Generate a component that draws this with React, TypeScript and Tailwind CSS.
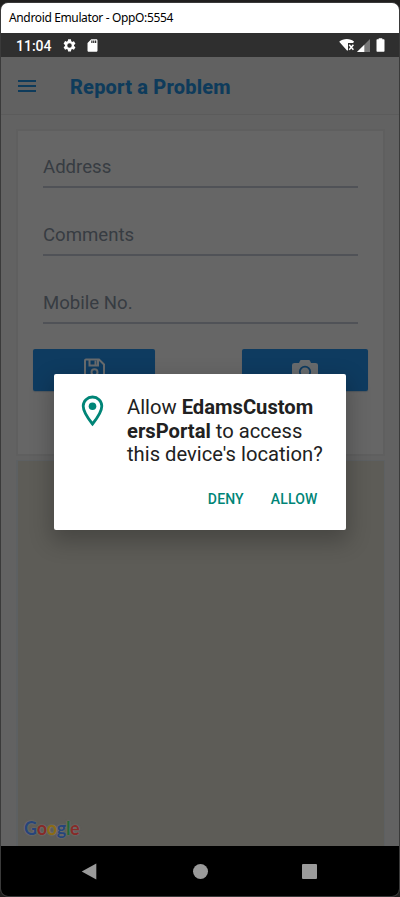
import React from "react";

function StatusBar() {
  return (
    <div className="flex h-6 shrink-0 items-center bg-[#2f2f2f] pl-[15px] pr-[14px] text-white">
      <span className="w-[37px] whitespace-nowrap pt-[2px] text-[14px] font-medium leading-6">11:04</span>
      <svg className="ml-[9px] h-[15px] w-[15px]" viewBox="0 0 24 24" fill="currentColor">
        <path d="M19.14 12.94a7.07 7.07 0 0 0 0-1.88l2.03-1.58a.5.5 0 0 0 .12-.61l-1.92-3.32a.49.49 0 0 0-.59-.22l-2.39.96a7 7 0 0 0-1.62-.94l-.36-2.54A.48.48 0 0 0 13.93 2h-3.84a.48.48 0 0 0-.48.41l-.36 2.54a7 7 0 0 0-1.62.94l-2.39-.96a.49.49 0 0 0-.59.22L2.74 8.87a.48.48 0 0 0 .12.61l2.03 1.58a7.07 7.07 0 0 0 0 1.88l-2.03 1.58a.5.5 0 0 0-.12.61l1.92 3.32c.12.22.37.29.59.22l2.39-.96a7 7 0 0 0 1.62.94l.36 2.54c.05.24.24.41.48.41h3.84c.24 0 .44-.17.47-.41l.36-2.54a7 7 0 0 0 1.62-.94l2.39.96c.22.08.47 0 .59-.22l1.92-3.32a.48.48 0 0 0-.12-.61zM12 15.6a3.6 3.6 0 1 1 0-7.2 3.6 3.6 0 0 1 0 7.2z" />
      </svg>
      <svg className="ml-[8px] h-[15px] w-[15px]" viewBox="0 0 24 24" fill="currentColor">
        <path d="M18 2h-8L4.02 8 4 20c0 1.1.9 2 2 2h12c1.1 0 2-.9 2-2V4c0-1.1-.9-2-2-2zm-6 6h-2V4h2zm3 0h-2V4h2zm3 0h-2V4h2z" />
      </svg>
      <svg className="ml-auto h-[14px] w-[16px]" viewBox="0 0 16 14">
        <path d="M.2 3.8C4.2.2 11.5.2 15.2 3.8L14 5H9v7.6h-1z" fill="#fff" />
        <path d="M10.2 6.7l4.2 5M14.4 6.7l-4.2 5" stroke="#fff" strokeWidth="1.5" />
      </svg>
      <svg className="ml-[2px] h-[13px] w-[13px]" viewBox="0 0 13 13">
        <path d="M13 0v13H0z" fill="#787878" />
        <path d="M7.3 5.7V13H0z" fill="#fff" />
      </svg>
      <svg className="ml-[6px] h-[14px] w-[9px]" viewBox="0 0 9 14" fill="currentColor">
        <path d="M1.2 1.3h1.5V.2h3.6v1.1h1.5q.7 0 .7.7v11q0 .8-.7.8H1.2q-.7 0-.7-.8V2q0-.7.7-.7z" />
      </svg>
    </div>
  );
}

function Field({ label }: { label: string }) {
  return (
    <div className="flex h-[58px] flex-col justify-end border-b-2 border-[#505257] pb-[7px]">
      <span className="text-[18.6px] leading-[24px] text-[#373c42]">{label}</span>
    </div>
  );
}

function FormCard() {
  return (
    <section className="ml-[15px] mr-[14px] mt-[14px] h-[327px] shrink-0 border-2 border-[#5f5f5f] bg-[#666666]">
      <div className="mx-[25px] -mt-px flex flex-col gap-[10px]">
        <Field label="Address" />
        <Field label="Comments" />
        <Field label="Mobile No." />
      </div>
      <div className="mt-[25px] flex justify-between px-[15px]">
        <button className="flex h-[42px] w-[122px] items-start justify-center rounded-[2px] bg-[#0e3b60] pt-[8px] shadow-[0_1px_1px_#50585f]">
          <svg className="h-[24px] w-[23px]" viewBox="0 0 23 24" fill="none" stroke="#686b6d" strokeWidth="2">
            <path d="M3 2.5h13l5 5v13q0 1-1 1H3q-1 0-1-1v-17q0-1 1-1z" />
            <path d="M6.5 2.5v6H15v-6M12.5 3.5v4" />
            <circle cx="11.5" cy="15.2" r="3" />
          </svg>
        </button>
        <button className="flex h-[42px] w-[126px] items-start justify-center rounded-[2px] bg-[#0e3b60] pt-[11px] shadow-[0_1px_1px_#50585f]">
          <svg className="h-[23px] w-[26px]" viewBox="0 0 26 23">
            <path d="M2.5 3H7l1-2.3Q8.3 0 9 0h8q.7 0 1 .7L19 3h4.500Q26 3 26 5v15q0 3-2.5 3h-21Q0 23 0 20V5q0-2 2.5-2z" fill="#686b6d" />
            <circle cx="13" cy="11.8" r="5.2" fill="none" stroke="#0e3b60" strokeWidth="1.8" />
          </svg>
        </button>
      </div>
    </section>
  );
}

function MapPanel() {
  return (
    <section className="ml-[15px] mr-[14px] mt-1 flex flex-1 items-end border-l-2 border-r border-t border-[#5d6062] bg-[#5d5c57] pb-[7px] pl-[6px]">
      <span className="whitespace-nowrap font-['Lato',sans-serif] text-[18px] font-bold leading-[22px] tracking-[-0.3px] [text-shadow:0_0_1px_#777,0_0_2px_#777]">
        <span className="text-[#27457a]">G</span>
        <span className="text-[#862b28]">o</span>
        <span className="text-[#8b6b14]">o</span>
        <span className="text-[#27457a]">g</span>
        <span className="text-[#246735]">l</span>
        <span className="text-[#862b28]">e</span>
      </span>
    </section>
  );
}

function PermissionDialog() {
  return (
    <div role="dialog" className="absolute left-[54px] top-[374px] h-[156px] w-[292px] rounded-[2px] bg-white shadow-[0_9px_22px_3px_rgba(0,0,0,0.24)]">
      <div className="flex pt-[21px]">
        <svg className="ml-[27px] h-[32px] w-[23px] shrink-0" viewBox="0 0 23 32">
          <path d="M11.5 2c-5.2 0-9.3 4-9.3 9.1 0 6.5 9.3 17.9 9.3 17.9s9.3-11.4 9.3-17.9C20.8 6 16.7 2 11.5 2z" fill="none" stroke="#008577" strokeWidth="2.8" />
          <circle cx="11.5" cy="11.3" r="3.8" fill="#008577" />
        </svg>
        <p className="ml-[23px] whitespace-nowrap pt-px text-[20.2px] leading-[23.6px] text-[#212121]">
          Allow <b className="font-bold">EdamsCustom</b>
          <br />
          <b className="font-bold">ersPortal</b> to access
          <br />
          this device's location?
        </p>
      </div>
      <div className="mt-[22px] flex justify-end gap-[27px] pr-[28.5px] text-[14px] font-medium leading-[20px] tracking-[0.15px] text-[#008577]">
        <button>DENY</button>
        <button>ALLOW</button>
      </div>
    </div>
  );
}

function NavBar() {
  return (
    <nav className="flex h-[50px] shrink-0 items-center bg-black pl-[80px] pr-[82px] text-[#9a9a9a]">
      <svg className="h-[17px] w-[16px]" viewBox="0 0 16 17" fill="currentColor"><path d="M.7 8.5 15.3.5v16z" /></svg>
      <span className="ml-auto mr-[-1px] h-[15px] w-[15px] rounded-full bg-[#9a9a9a]" />
      <span className="ml-auto h-[15px] w-[15px] rounded-[1px] bg-[#9a9a9a]" />
    </nav>
  );
}

export default function App() {
  return (
    <div className="h-[897px] w-[400px] overflow-hidden bg-[#201f1e] font-['Roboto',sans-serif]">
      <main className="relative flex h-[897px] flex-col overflow-hidden pt-[2px]">
        <div className="flex min-h-0 flex-1 flex-col overflow-hidden rounded-[8px] border border-[#3a3a3a] bg-[#626262]">
          <header className="flex h-[30px] shrink-0 items-center bg-white pl-2 font-['Noto_Sans',sans-serif] text-[12px] tracking-[-0.36px] text-black">
            <h1 className="whitespace-nowrap">Android Emulator - OppO:5554</h1>
          </header>
          <StatusBar />
          <div className="flex h-[58px] shrink-0 items-center border-b border-[#5b5b5b] bg-[#616161] pl-[17px] text-[#0e3b5b]">
            <svg className="h-[14px] w-[18px]" viewBox="0 0 18 14" stroke="currentColor" strokeWidth="2">
              <path d="M0 2h18M0 7h18M0 12h18" />
            </svg>
            <h2 className="ml-[34px] whitespace-nowrap pt-[3px] text-[20px] font-extrabold tracking-[0.18px]">Report a Problem</h2>
          </div>
          <FormCard />
          <MapPanel />
          <NavBar />
        </div>
        <PermissionDialog />
      </main>
    </div>
  );
}
